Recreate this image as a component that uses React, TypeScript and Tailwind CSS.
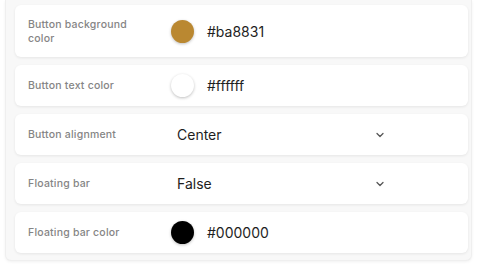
import { ChevronDown } from 'lucide-react'

const rows = [
  { label: 'Button background color', kind: 'color', value: '#ba8831', swatch: 'bg-[#ba8831]', tall: true },
  { label: 'Button text color', kind: 'color', value: '#ffffff', swatch: 'bg-white' },
  { label: 'Button alignment', kind: 'select', value: 'Center' },
  { label: 'Floating bar', kind: 'select', value: 'False' },
  { label: 'Floating bar color', kind: 'color', value: '#000000', swatch: 'bg-black' },
]

export default function App() {
  return (
    <div className="w-[480px] h-[267px] bg-white font-['Inter','Liberation_Sans',sans-serif] pl-[5px] pr-2 pt-0">
      <div className="h-[261px] rounded-b-md border border-t-0 border-[#efefef] bg-[#f8f8f8] shadow-[0_1px_3px_rgba(0,0,0,0.06)] pl-[9px] pr-[3px] pt-[5px] flex flex-col gap-2">
        {rows.map(r => (
          <div
            key={r.label}
            className={`flex items-center bg-white rounded-md shadow-[0_1px_3px_rgba(0,0,0,0.08)] pl-[13px] pr-[82px] ${r.tall ? 'h-[52px]' : 'h-[41px]'}`}
          >
            <div className="w-[130px] shrink-0 pt-[1px]">
              <div className="max-w-[104px] text-[10.5px] leading-[14px] font-medium text-[#858585] tracking-[0.2px]">{r.label}</div>
            </div>
            {r.kind === 'color' ? (
              <div className="flex items-center gap-[13px] pl-[13px]">
                <span className={`w-[23px] h-[23px] rounded-full ${r.swatch} shadow-[0_1px_3px_rgba(0,0,0,0.25)]`} />
                <span className="text-[14px] text-[#1e1e1e]">{r.value}</span>
              </div>
            ) : (
              <div className="flex flex-1 items-center justify-between pl-[19px]">
                <span className="text-[14px] text-[#1e1e1e]">{r.value}</span>
                <ChevronDown className="w-[12px] h-[12px] text-[#555]" strokeWidth={2.5} />
              </div>
            )}
          </div>
        ))}
      </div>
    </div>
  )
}
